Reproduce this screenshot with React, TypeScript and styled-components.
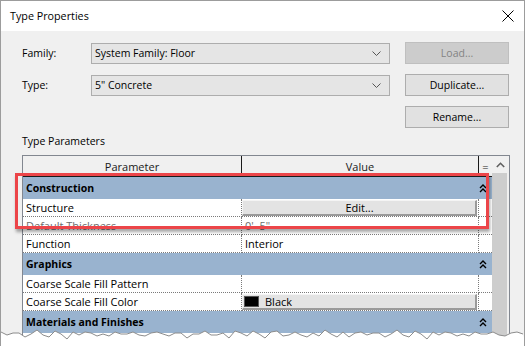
import React from 'react';
import styled, { createGlobalStyle } from 'styled-components';

const GlobalStyle = createGlobalStyle`
  html, body { margin: 0; padding: 0; background: #fff; }
`;

const Window = styled.div`
  position: relative;
  width: 525px;
  height: 346px;
  overflow: hidden;
  box-sizing: border-box;
  background: #f0f0f0;
  border: 1px solid #9c9c9c;
  border-bottom: none;
  font-family: 'Open Sans', 'Noto Sans', sans-serif;
  font-size: 10.5px;
  color: #000;
`;

const TitleBar = styled.div`
  height: 30px;
  background: #fff;
  display: flex;
  align-items: center;
  justify-content: space-between;
  padding: 0 10px 0 9px;
`;

const Title = styled.span`
  font-size: 10.75px;
`;

const Body = styled.div`
  padding: 11px 14px 0 20px;
`;

const Form = styled.div`
  display: grid;
  grid-template-columns: 55px 299px 104px;
  grid-template-rows: 22px 22px 22px;
  column-gap: 15px;
  row-gap: 10px;
  align-items: center;
`;

const Label = styled.span`
  padding-left: 1px;
`;

const Combo = styled.div`
  height: 21px;
  box-sizing: border-box;
  border: 1px solid #adadad;
  background: #e5e5e5;
  display: flex;
  align-items: center;
  justify-content: space-between;
  padding: 0 8px 0 3px;
`;

const Button = styled.div<{ $disabled?: boolean }>`
  height: 22px;
  box-sizing: border-box;
  border: 1px solid ${p => (p.$disabled ? '#bfbfbf' : '#adadad')};
  background: ${p => (p.$disabled ? '#cccccc' : '#e1e1e1')};
  color: ${p => (p.$disabled ? '#838383' : '#000')};
  display: flex;
  align-items: center;
  justify-content: center;
`;

const SectionLabel = styled.div`
  margin: 6px 0 7px 1px;
  line-height: 14px;
`;

const Table = styled.div`
  margin-left: 1px;
  width: 488px;
  height: 200px;
  box-sizing: border-box;
  border: 1px solid #828790;
  background: #fff;
  display: flex;
  font-size: 11px;
`;

const Grid = styled.div`
  flex: 1;
  display: grid;
  grid-template-columns: 219px 237px 1fr;
  grid-auto-rows: min-content;
  align-content: start;
`;

const HeadCell = styled.div<{ $last?: boolean }>`
  height: 20px;
  background: #f0f0f0;
  border-bottom: 1px solid #1a1a1a;
  border-right: ${p => (p.$last ? 'none' : '1px solid #1a1a1a')};
  display: flex;
  align-items: center;
  justify-content: center;
  color: #1a1a1a;
`;

const GroupRow = styled.div`
  grid-column: 1 / -1;
  height: 22px;
  background: #99b3cf;
  font-weight: bold;
  font-size: 10.5px;
  display: flex;
  align-items: center;
  justify-content: space-between;
  padding: 0 5px 0 3px;
`;

const Cell = styled.div<{ $muted?: boolean; $divider?: boolean }>`
  height: 18px;
  box-sizing: border-box;
  border-bottom: 1px dotted #7a7a7a;
  border-right: ${p => (p.$divider ? '1px dotted #7a7a7a' : 'none')};
  color: ${p => (p.$muted ? '#6d6d6d' : '#000')};
  display: flex;
  align-items: center;
  padding-left: 3px;
  white-space: pre;
  overflow: hidden;
`;

const CellButton = styled.div<{ $align?: string }>`
  flex: 1;
  height: 16px;
  box-sizing: border-box;
  margin: 0 1px 0 -3px;
  background: #e3e3e3;
  border-top: 1px solid #f4f4f4;
  border-left: 1px solid #f4f4f4;
  border-right: 2px solid #9a9a9a;
  border-bottom: 2px solid #9a9a9a;
  display: flex;
  align-items: center;
  justify-content: ${p => p.$align || 'center'};
  gap: 6px;
  padding-left: 1px;
`;

const Swatch = styled.span`
  width: 15px;
  height: 11px;
  background: #000;
  border: 1px solid #555;
  box-sizing: border-box;
`;

const ScrollBar = styled.div`
  width: 17px;
  background: #f0f0f0;
  display: flex;
  flex-direction: column;
  align-items: stretch;
`;

const ScrollArrow = styled.div`
  height: 17px;
  display: flex;
  align-items: center;
  justify-content: center;
`;

const ScrollThumb = styled.div`
  flex: 1;
  margin-right: 2px;
  background: #cdcdcd;
`;

const Highlight = styled.div`
  position: absolute;
  left: 14px;
  top: 172px;
  width: 474px;
  height: 56px;
  box-sizing: border-box;
  border: 3px solid #ec4549;
  box-shadow: 1px 3px 3px rgba(0, 0, 0, 0.35);
  pointer-events: none;
`;

const TornEdge = styled.svg`
  position: absolute;
  left: 0;
  bottom: 0;
  width: 525px;
  height: 18px;
`;

const Chevron = () => (
  <svg width="9" height="5" viewBox="0 0 9 5">
    <polyline points="0.5,0.5 4.5,4.5 8.5,0.5" fill="none" stroke="#555" strokeWidth="1" />
  </svg>
);

const Collapse = () => (
  <svg width="8" height="9" viewBox="0 0 8 9">
    <polyline points="1,4 4,1 7,4" fill="none" stroke="#000" strokeWidth="1.4" />
    <polyline points="1,8 4,5 7,8" fill="none" stroke="#000" strokeWidth="1.4" />
  </svg>
);

const tornPath = (() => {
  const pts: string[] = [];
  const ys = [5, 7, 4, 6, 9, 5, 3, 7, 8, 4, 6, 10, 5, 7, 3, 6, 8, 5, 9, 4];
  for (let x = 0, i = 0; x <= 525; x += 6, i++) {
    const y = ys[i % ys.length] + ((i * 7) % 3) - 1;
    pts.push(`${x},${y}`);
  }
  return pts;
})();

interface Row {
  group?: string;
  name?: string;
  value?: React.ReactNode;
  muted?: boolean;
}

const rows: Row[] = [
  { group: 'Construction' },
  { name: 'Structure', value: <CellButton>Edit...</CellButton> },
  { name: 'Default Thickness', value: '0\'  5"', muted: true },
  { name: 'Function', value: 'Interior' },
  { group: 'Graphics' },
  { name: 'Coarse Scale Fill Pattern', value: '' },
  {
    name: 'Coarse Scale Fill Color',
    value: (
      <CellButton $align="flex-start">
        <Swatch />
        Black
      </CellButton>
    ),
  },
  { group: 'Materials and Finishes' },
];

export default function App() {
  return (
    <>
      <GlobalStyle />
      <Window>
        <TitleBar>
          <Title>Type Properties</Title>
          <svg width="12" height="12" viewBox="0 0 12 12">
            <path d="M0.5 0.5 L11.5 11.5 M11.5 0.5 L0.5 11.5" stroke="#000" strokeWidth="1" />
          </svg>
        </TitleBar>
        <Body>
          <Form>
            <Label>Family:</Label>
            <Combo>
              System Family: Floor
              <Chevron />
            </Combo>
            <Button $disabled>Load...</Button>
            <Label>Type:</Label>
            <Combo>
              5" Concrete
              <Chevron />
            </Combo>
            <Button>Duplicate...</Button>
            <span />
            <span />
            <Button>Rename...</Button>
          </Form>
          <SectionLabel>Type Parameters</SectionLabel>
          <Table>
            <Grid>
              <HeadCell>Parameter</HeadCell>
              <HeadCell>Value</HeadCell>
              <HeadCell $last>=</HeadCell>
              {rows.map((r, i) =>
                r.group ? (
                  <GroupRow key={i}>
                    {r.group}
                    <Collapse />
                  </GroupRow>
                ) : (
                  <React.Fragment key={i}>
                    <Cell $divider $muted={r.muted}>{r.name}</Cell>
                    <Cell $divider $muted={r.muted}>{r.value}</Cell>
                    <Cell />
                  </React.Fragment>
                )
              )}
            </Grid>
            <ScrollBar>
              <ScrollArrow>
                <svg width="9" height="6" viewBox="0 0 9 6">
                  <polyline points="0.8,5 4.5,1.3 8.2,5" fill="none" stroke="#606060" strokeWidth="1.6" />
                </svg>
              </ScrollArrow>
              <ScrollThumb />
            </ScrollBar>
          </Table>
        </Body>
        <Highlight />
        <TornEdge viewBox="0 0 525 18">
          <polygon points={`0,18 ${tornPath.join(' ')} 525,18`} fill="#fff" />
          <polyline points={tornPath.join(' ')} fill="none" stroke="#8c8c8c" strokeWidth="1" />
        </TornEdge>
      </Window>
    </>
  );
}
